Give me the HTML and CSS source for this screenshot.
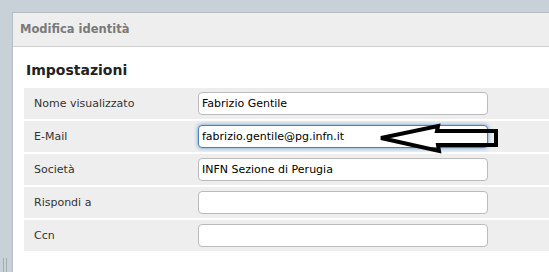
FILE: index.html
```
<!DOCTYPE html>
<html lang="it">
<head>
    <meta charset="UTF-8">
    <title>Modifica identità</title>
    <link rel="stylesheet" href="styles.css">
</head>
<body>
    <div class="splitter">
        <div class="grip"></div>
    </div>
    <div class="panel">
        <div class="panel-header">Modifica identità</div>
        <div class="panel-body">
            <h2>Impostazioni</h2>
            <div class="field-row">
                <label>Nome visualizzato</label>
                <input type="text" value="Fabrizio Gentile">
            </div>
            <div class="field-row">
                <label>E-Mail</label>
                <input type="text" class="focused" value="fabrizio.gentile@pg.infn.it">
                <!-- arrow drawn over the screenshot -->
                <svg class="arrow" width="549" height="40" viewBox="0 0 549 40">
                    <polygon points="357,17 414,5 413,10 472,10 472,24 414,24 415,30" />
                </svg>
            </div>
            <div class="field-row">
                <label>Società</label>
                <input type="text" value="INFN Sezione di Perugia">
            </div>
            <div class="field-row">
                <label>Rispondi a</label>
                <input type="text" value="">
            </div>
            <div class="field-row">
                <label>Ccn</label>
                <input type="text" value="">
            </div>
        </div>
    </div>
</body>
</html>
```
FILE: styles.css
```
/* Page frame */
body {
    margin: 0;
    height: 272px;
    overflow: hidden;
    display: flex;
    background-color: #c8d0d8;
    font-family: "DejaVu Sans", Verdana, sans-serif;
}

.splitter {
    width: 12px;
    display: flex;
    flex-direction: column;
    justify-content: flex-end;
}

.grip {
    width: 2px;
    height: 14px;
    margin-left: 3px;
    border-left: 1px solid #a3abb4;
    border-right: 1px solid #a3abb4;
}

/* Panel */
.panel {
    flex: 1;
    margin-top: 12px;
    background-color: #fff;
    border-top: 1px solid #b4bcc4;
    border-left: 1px solid #b4bcc4;
}

.panel-header {
    height: 33px;
    line-height: 33px;
    padding-left: 7px;
    background-color: #eeeeee;
    border-bottom: 1px solid #cfcfcf;
    color: #7a7a7a;
    font-size: 11.5px;
    font-weight: bold;
}

.panel-body {
    padding: 14px 0 0 11px;
}

.panel-body h2 {
    margin: 0 0 9px 2px;
    font-size: 14px;
    line-height: 18px;
    color: #222;
}

/* Form rows */
.field-row {
    position: relative;
    display: flex;
    align-items: center;
    height: 31px;
    margin-bottom: 2px;
    background-color: #eeeeee;
}

.field-row label {
    width: 164px;
    padding-left: 10px;
    font-size: 11px;
    color: #333;
}

.field-row input {
    box-sizing: border-box;
    width: 290px;
    height: 23px;
    padding: 0 3px;
    border: 1px solid #bbbbbb;
    border-radius: 4px;
    background-color: #fff;
    font-family: "DejaVu Sans", Verdana, sans-serif;
    font-size: 11px;
    color: #000;
    outline: none;
}

.field-row input.focused {
    border-color: #4f7fb5;
    box-shadow: 0 0 4px #5c95d6;
}

.arrow {
    position: absolute;
    left: 0;
    top: 0;
    pointer-events: none;
}

.arrow polygon {
    fill: none;
    stroke: #000;
    stroke-width: 4;
    stroke-linejoin: miter;
}
```
